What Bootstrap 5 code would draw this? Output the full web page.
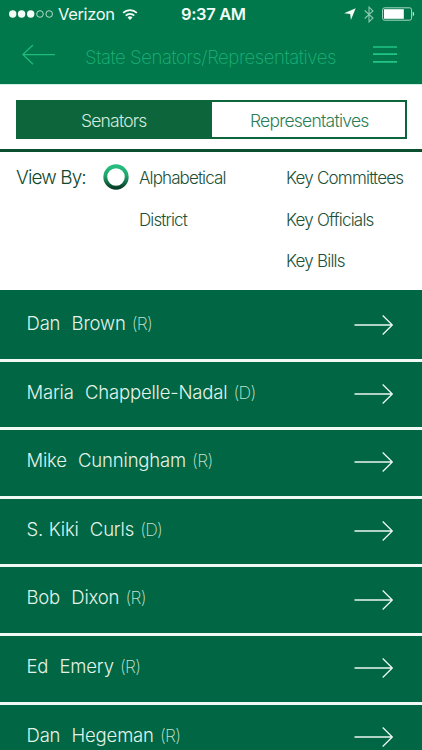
<!DOCTYPE html>
<html lang="en">
<head>
<meta charset="utf-8">
<meta name="viewport" content="width=device-width, initial-scale=1">
<title>State Senators/Representatives</title>
<link rel="stylesheet" href="https://cdn.jsdelivr.net/npm/bootstrap@5.3.0/dist/css/bootstrap.min.css">
<style>
  html, body { height: 100%; }
  body { font-family: Inter, "Liberation Sans", sans-serif; background: #fff; overflow: hidden; }
  svg { display: block; flex: none; fill: none; }
  .app { height: 100vh; }
  .top { background: #00784c; height: 85px; border-bottom: 1px solid #d0efe4; }
  .status { height: 28px; padding: 0 7px 0 9px; color: #f2fbf6; font-size: 16.5px; line-height: 28px; }
  .carrier { margin-left: 4px; letter-spacing: -.35px; width: 56px; }
  .clock { font-weight: 600; margin-left: 43px; letter-spacing: -.36px; }
  .titlebar { height: 56px; padding: 0 25px 0 22px; }
  .heading { color: #1fb378; font-size: 18.5px; font-weight: 200; letter-spacing: -.38px; line-height: 24px; margin: 1px 0 0 30px; }
  .segwrap { height: 67px; padding: 15px 15px 0 16px; border-bottom: 3px solid #0c4f30; }
  .seg { height: 39px; border: 2px solid #0d653c; }
  .seg .btn { border: 0; border-radius: 0; padding: 0 2px 0 0; font-size: 17.5px; font-weight: 300; letter-spacing: -.8px; line-height: 37px; color: #2b7e58; }
  .seg .btn + .btn { letter-spacing: -.75px; padding: 0 0 0 2px; }
  .seg .btn.active { background: #0d653c; color: #d3eadd; }
  .filters { height: 138px; padding-left: 16px; color: #1c5137; font-size: 17px; font-weight: 300; letter-spacing: -.77px; line-height: 24px; }
  .filters > div { flex: none; }
  .filters .viewby { width: 87px; font-size: 19px; font-weight: 350; letter-spacing: -.9px; color: #10482d; padding-top: 14px; }
  .filters .ring { width: 36px; padding-top: 12px; }
  .filters .opts { width: 147px; padding-top: 14px; letter-spacing: -.88px; }
  .filters .opts + .opts { width: 136px; letter-spacing: -.78px; }
  .opts div { height: 41.6px; }
  .people { background: #006644; }
  .person { height: 68.6px; padding: 0 28px 0 26.5px; background: #006644; border-top: 3px solid #f0f9f4; color: #e3f3ea; font-size: 18.5px; font-weight: 300; letter-spacing: -.18px; word-spacing: .6px; line-height: 24px; flex: none; text-decoration: none; }
  .person:hover { color: #fff; }
  .person:first-child { border-top-color: #006644; }
  .person .who { padding-top: 18px; white-space: pre; }
  .person small { font-size: 17.5px; font-weight: 200; letter-spacing: -.7px; margin-left: .5px; color: #c3e2d1; }
  .person svg { margin-top: 21.2px; }
</style>
</head>
<body>
<svg width="0" height="0" class="position-absolute">
  <symbol id="go" viewBox="0 0 40 22"><path d="M.5 11H38M28.7 1.5 38.3 11l-9.6 9.5" stroke="#ecf8f1" stroke-width="1.3"/></symbol>
</svg>
<div class="app d-flex flex-column">
  <header class="top flex-shrink-0">
    <div class="status d-flex align-items-center">
      <svg width="45" height="10" viewBox="0 0 45 10"><g fill="#f4fcf8"><circle cx="3.7" cy="5" r="3.7"/><circle cx="12.6" cy="5" r="3.7"/><circle cx="21.7" cy="5" r="3.7"/></g><g stroke="#c7e6d8" stroke-width=".9"><circle cx="31" cy="5" r="3.3"/><circle cx="40.2" cy="5" r="3.3"/></g></svg>
      <span class="carrier">Verizon</span>
      <svg class="ms-2" width="16" height="13" viewBox="0 0 18 14"><g stroke="#f4fcf8" stroke-width="2"><path d="M1.3 5.1a11 11 0 0 1 15.4 0M4.2 8.2a6.8 6.8 0 0 1 9.6 0"/></g><path d="M6.2 10.3a4 4 0 0 1 5.6 0L9 13.1z" fill="#f4fcf8"/></svg>
      <span class="clock">9:37 AM</span>
      <svg class="ms-auto" width="12" height="12" viewBox="0 0 12 12"><path d="M11.7.2 6.9 11.9 6.2 6 .1 5.3z" fill="#f4fcf8"/></svg>
      <svg width="10" height="17" viewBox="0 0 10 17" style="margin-left:8px"><path d="M.7 4.5 9 12 5 15.9V1.1L9 5 .7 12.5" stroke="#8cc8ac" stroke-width="1.1"/></svg>
      <svg width="33" height="14" viewBox="0 0 33 14" style="margin-left:8px"><rect x=".6" y=".8" width="29" height="12.4" rx="2" stroke="#a9d8c3"/><path d="M2 2.2h19.8v9.6H2z" fill="#fff"/><path d="M30.8 4.8c1.7.6 1.7 3.8 0 4.4z" fill="#d4ede1"/></svg>
    </div>
    <div class="titlebar d-flex align-items-center">
      <svg width="33" height="22" viewBox="0 0 33 22" class="mb-1"><path d="M33 11.5H1M11 2 .9 11.5 11 21.3" stroke="#20ba7b" stroke-width="1.25"/></svg>
      <h1 class="heading">State Senators/Representatives</h1>
      <svg class="ms-auto mb-1" width="24" height="18" viewBox="0 0 24 18"><path d="M0 2h24M0 9.2h24M0 16.8h24" stroke="#22c584" stroke-width="1.7"/></svg>
    </div>
  </header>
  <div class="segwrap flex-shrink-0">
    <div class="seg d-flex">
      <button class="btn active w-50">Senators</button>
      <button class="btn w-50">Representatives</button>
    </div>
  </div>
  <section class="filters d-flex flex-shrink-0">
    <div class="viewby">View By:</div>
    <div class="ring"><svg width="26" height="26" viewBox="0 0 26 26"><defs><linearGradient id="rg" x2="0" y2="1"><stop stop-color="#27bd80"/><stop offset=".45" stop-color="#21a36d"/><stop offset="1" stop-color="#073f28"/></linearGradient></defs><circle cx="13" cy="13" r="10.7" stroke="url(#rg)" stroke-width="3.9"/></svg></div>
    <div class="opts"><div>Alphabetical</div><div>District</div></div>
    <div class="opts"><div>Key Committees</div><div>Key Officials</div><div>Key Bills</div></div>
  </section>
  <main class="people list-group list-group-flush rounded-0 flex-grow-1 overflow-hidden">
    <a href="#" class="person d-flex justify-content-between"><span class="who">Dan  Brown <small>(R)</small></span><svg width="40" height="22"><use href="#go"/></svg></a>
    <a href="#" class="person d-flex justify-content-between"><span class="who">Maria  Chappelle-Nadal <small>(D)</small></span><svg width="40" height="22"><use href="#go"/></svg></a>
    <a href="#" class="person d-flex justify-content-between"><span class="who">Mike  Cunningham <small>(R)</small></span><svg width="40" height="22"><use href="#go"/></svg></a>
    <a href="#" class="person d-flex justify-content-between"><span class="who">S. Kiki  Curls <small>(D)</small></span><svg width="40" height="22"><use href="#go"/></svg></a>
    <a href="#" class="person d-flex justify-content-between"><span class="who">Bob  Dixon <small>(R)</small></span><svg width="40" height="22"><use href="#go"/></svg></a>
    <a href="#" class="person d-flex justify-content-between"><span class="who">Ed  Emery <small>(R)</small></span><svg width="40" height="22"><use href="#go"/></svg></a>
    <a href="#" class="person d-flex justify-content-between"><span class="who">Dan  Hegeman <small>(R)</small></span><svg width="40" height="22"><use href="#go"/></svg></a>
  </main>
</div>
<script src="https://cdn.jsdelivr.net/npm/bootstrap@5.3.0/dist/js/bootstrap.bundle.min.js"></script>
</body>
</html>
